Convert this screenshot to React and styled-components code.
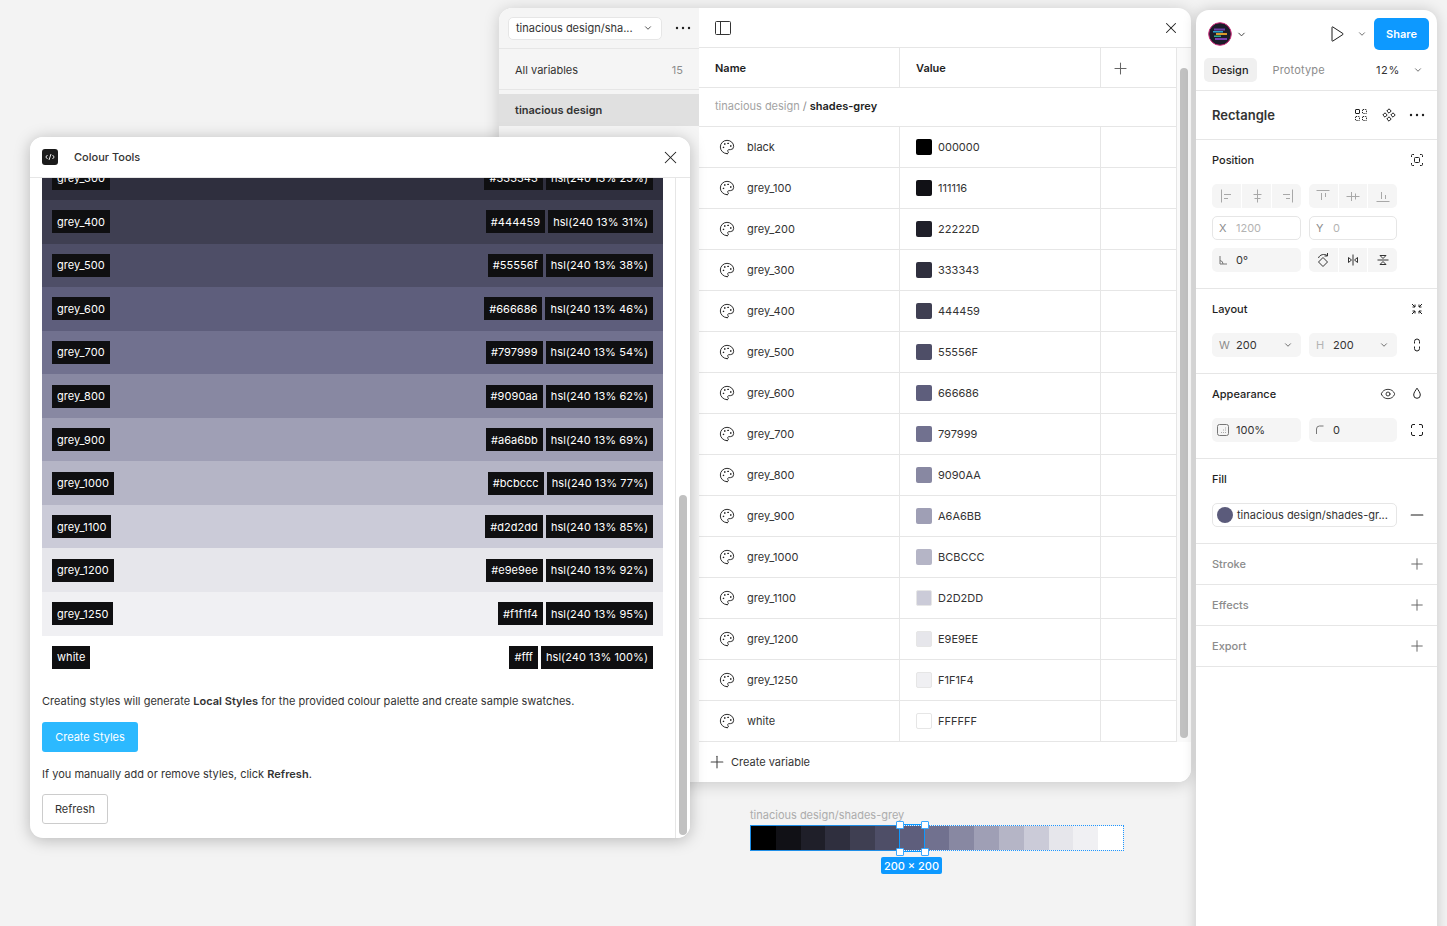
import React from 'react';
import styled, { createGlobalStyle } from 'styled-components';
import { Palette, Plus, X, ChevronDown, Minus, Eye } from 'lucide-react';

const GlobalStyle = createGlobalStyle`
  html, body {
    margin: 0;
    padding: 0;
    background: #f3f3f3;
    font-family: Inter, "Liberation Sans", sans-serif;
    -webkit-font-smoothing: antialiased;
  }
  * { box-sizing: border-box; }
`;

const Desktop = styled.div`
  position: relative;
  width: 1447px;
  height: 926px;
  overflow: hidden;
  background: #f3f3f3;
  color: #1e1e1e;
`;

// Variables window
const VariablesWindow = styled.div`
  position: absolute;
  left: 499px;
  top: 8px;
  width: 692px;
  height: 774px;
  display: flex;
  border-radius: 13px;
  overflow: hidden;
  background: #fff;
  box-shadow: 0 2px 16px rgba(0, 0, 0, 0.18);
`;

const Sidebar = styled.div`
  width: 200px;
  flex: none;
  background: #f5f5f5;
  display: flex;
  flex-direction: column;
`;

const SidebarTop = styled.div`
  height: 41px;
  flex: none;
  display: flex;
  align-items: center;
  padding: 0 8px 0 9px;
  justify-content: space-between;
  border-bottom: 1px solid #e6e6e6;
`;

const CollectionSelect = styled.div`
  width: 154px;
  height: 23px;
  display: flex;
  align-items: center;
  justify-content: space-between;
  padding: 0 8px 0 7px;
  background: #fff;
  border: 1px solid #e6e6e6;
  border-radius: 5px;
  font-size: 11px;
  color: #333;
`;

const AllVariables = styled.div`
  height: 41px;
  flex: none;
  display: flex;
  align-items: center;
  justify-content: space-between;
  padding: 2px 16px 0;
  font-size: 11px;
  color: #333;
  border-bottom: 1px solid #e6e6e6;

  span:last-child { color: #8c8c8c; }
`;

const GroupItem = styled.div`
  height: 32px;
  margin-top: 4px;
  display: flex;
  align-items: center;
  padding: 0 16px;
  background: #e0e0e0;
  font-size: 11px;
  font-weight: 600;
  color: #333;
`;

const Main = styled.div`
  flex: 1;
  min-width: 0;
  display: flex;
  flex-direction: column;
`;

const MainTop = styled.div`
  height: 40px;
  flex: none;
  display: flex;
  align-items: center;
  justify-content: space-between;
  padding: 0 11px 0 16px;
  border-bottom: 1px solid #e6e6e6;
`;

const TableWrap = styled.div`
  flex: 1;
  display: flex;
  min-height: 0;
`;

const Table = styled.div`
  flex: 1;
  min-width: 0;
  display: flex;
  flex-direction: column;
`;

const Row = styled.div`
  height: ${p => p.$h || 41}px;
  flex: none;
  display: grid;
  grid-template-columns: 201px 201px 1fr;
  border-bottom: 1px solid #e6e6e6;
`;

const HeadCell = styled.div`
  display: flex;
  align-items: center;
  padding-left: 16px;
  font-size: 11px;
  font-weight: 600;
  color: #1e1e1e;
  border-right: 1px solid #e6e6e6;
`;

const AddCell = styled.div`
  display: flex;
  align-items: center;
  padding: 1px 0 0 10px;
  color: #666;
`;

const GroupRow = styled.div`
  height: 39px;
  flex: none;
  display: flex;
  align-items: center;
  padding-left: 16px;
  padding-bottom: 2px;
  font-size: 11px;
  color: #a3a3a3;
  border-bottom: 1px solid #e6e6e6;

  span { color: #8c8c8c; margin: 0 3px; }
  b { color: #1e1e1e; font-weight: 600; }
`;

const NameCell = styled.div`
  display: flex;
  align-items: center;
  gap: 12px;
  padding-left: 20px;
  font-size: 11px;
  color: #333;
  border-right: 1px solid #e6e6e6;
`;

const ValueCell = styled.div`
  display: flex;
  align-items: center;
  gap: 6px;
  padding-left: 16px;
  font-size: 11px;
  color: #333;
  border-right: 1px solid #e6e6e6;
`;

const Swatch = styled.div`
  width: 16px;
  height: 16px;
  border-radius: 2px;
  background: ${p => p.$c};
  border: 1px solid ${p => (p.$light ? '#e6e6e6' : 'transparent')};
`;

const BlankCell = styled.div``;

const ScrollTrack = styled.div`
  width: 15px;
  flex: none;
  background: #fafafa;
  border-left: 1px solid #e6e6e6;
  padding: ${p => p.$top}px 0 0 3px;
`;

const ScrollThumb = styled.div`
  width: 8px;
  height: ${p => p.$h}px;
  border-radius: 4px;
  background: #c1c1c1;
`;

const CreateBar = styled.div`
  height: 40px;
  flex: none;
  display: flex;
  align-items: center;
  gap: 4px;
  padding-left: 8px;
  font-size: 11px;
  color: #333;
  background: #fff;

  svg { color: #444; }
`;

// Plugin window
const PluginWindow = styled.div`
  position: absolute;
  left: 30px;
  top: 137px;
  width: 660px;
  height: 701px;
  display: flex;
  flex-direction: column;
  border-radius: 13px;
  overflow: hidden;
  background: #fff;
  box-shadow: 0 2px 16px rgba(0, 0, 0, 0.25);
`;

const PluginHeader = styled.div`
  height: 41px;
  flex: none;
  display: flex;
  align-items: center;
  padding: 0 9.5px 0 12px;
  border-bottom: 1px solid #e6e6e6;
  font-size: 11px;
  font-weight: 500;
  color: #333;
  background: #fff;
`;

const PluginBadge = styled.div`
  width: 16px;
  height: 16px;
  margin-right: 16px;
  border-radius: 3px;
  background: #1a1a1a;
  display: flex;
  align-items: center;
  justify-content: center;
  color: #fff;
`;

const PluginClose = styled.div`
  margin-left: auto;
  display: flex;
  color: #1e1e1e;
`;

const PluginBody = styled.div`
  flex: 1;
  display: flex;
  min-height: 0;
`;

const PluginContent = styled.div`
  flex: 1;
  min-width: 0;
  overflow: hidden;
  padding: 0 12px;
`;

const ColourList = styled.div`
  margin-top: -21.5px;
`;

const ColourRow = styled.div`
  height: 43.55px;
  display: flex;
  align-items: center;
  justify-content: space-between;
  padding: 0 10px;
  background: ${p => p.$c};
`;

const TagGroup = styled.div`
  display: flex;
  gap: 3px;
`;

const Tag = styled.span`
  height: 23px;
  display: flex;
  align-items: center;
  padding: 0 5px;
  background: #0f0f11;
  color: #fff;
  font-size: 11px;
  letter-spacing: 0.06px;
  white-space: nowrap;
`;

const Para = styled.p`
  margin: 14px 0 11.5px;
  font-size: 11px;
  line-height: 17px;
  letter-spacing: 0.02px;
  color: #333;

  b { font-weight: 600; }
`;

const PrimaryBtn = styled.div`
  width: 96px;
  height: 30px;
  display: flex;
  align-items: center;
  justify-content: center;
  border-radius: 3px;
  background: #2cb9ff;
  color: #fff;
  font-size: 11px;
`;

const SecondaryBtn = styled.div`
  width: 66px;
  height: 30px;
  display: flex;
  align-items: center;
  justify-content: center;
  border-radius: 3px;
  border: 1px solid #ccc;
  color: #333;
  font-size: 11px;
`;

const PluginTrack = styled(ScrollTrack)`
  background: #fff;
`;

// Canvas frame with the selection
const CanvasFrame = styled.div`
  position: absolute;
  left: 750px;
  top: 808px;
  width: 374px;
`;

const FrameLabel = styled.div`
  font-size: 11px;
  line-height: 15px;
  color: #acacac;
  margin-bottom: 2px;
`;

const Strip = styled.div`
  position: relative;
  height: 26px;
  display: flex;
  border: 1px dotted #1e96ff;
`;

const StripCell = styled.div`
  flex: 1;
  background: ${p => p.$c};
`;

const SolidEdge = styled.div`
  position: absolute;
  left: -1px;
  top: -1px;
  bottom: -1px;
  width: 150px;
  border: 1px solid #1f8fe8;
  border-right: none;
`;

const Selection = styled.div`
  position: absolute;
  left: 148px;
  top: -2px;
  width: 26px;
  height: 28px;
  border: 1px solid #0d99ff;
`;

const Handle = styled.div`
  position: absolute;
  width: 8px;
  height: 8px;
  background: #fff;
  border: 1.5px solid #3aa8ff;
  border-radius: 1px;
  ${p => (p.$r ? 'right: -4.5px;' : 'left: -4.5px;')}
  ${p => (p.$b ? 'bottom: -4.5px;' : 'top: -4.5px;')}
`;

const SizeBadge = styled.div`
  position: absolute;
  left: 130px;
  top: 31px;
  width: 61px;
  height: 17px;
  display: flex;
  align-items: center;
  justify-content: center;
  border-radius: 2px;
  background: #0d99ff;
  color: #fff;
  font-size: 11px;
  font-weight: 500;
`;

// Right design panel
const DesignPanel = styled.div`
  position: absolute;
  left: 1196px;
  top: 10px;
  width: 241px;
  height: 930px;
  background: #fff;
  border-radius: 13px 13px 0 0;
  box-shadow: 0 0 14px rgba(0, 0, 0, 0.18);
  font-size: 11px;
  color: #333;
`;

const PanelTop = styled.div`
  height: 48px;
  display: flex;
  align-items: center;
  padding: 0 8px 0 12px;
`;

const LogoGroup = styled.div`
  display: flex;
  align-items: center;
  gap: 4px;
  margin-right: auto;
`;

const PlayGroup = styled.div`
  display: flex;
  align-items: center;
  gap: 13px;
`;

const ShareBtn = styled.div`
  width: 55px;
  height: 32px;
  margin-left: 7px;
  display: flex;
  align-items: center;
  justify-content: center;
  border-radius: 5px;
  background: #0d99ff;
  color: #fff;
  font-weight: 600;
  font-size: 11px;
`;

const TabsRow = styled.div`
  height: 33px;
  display: flex;
  align-items: flex-start;
  padding: 0 14px 0 8px;
  border-bottom: 1px solid #e6e6e6;
`;

const Tab = styled.div`
  height: 24px;
  display: flex;
  align-items: center;
  padding: 0 8px;
  border-radius: 5px;
  font-weight: ${p => (p.$active ? 500 : 400)};
  background: ${p => (p.$active ? '#f0f0f0' : 'transparent')};
  color: ${p => (p.$active ? '#1e1e1e' : '#8c8c8c')};
  margin-right: ${p => (p.$active ? 8 : 0)}px;
  letter-spacing: ${p => (p.$active ? 0 : 0.15)}px;
`;

const Zoom = styled.div`
  margin-left: auto;
  height: 24px;
  display: flex;
  align-items: center;
  gap: 13px;
  color: #333;
  letter-spacing: 0.7px;
`;

const TitleRow = styled.div`
  height: 49px;
  display: flex;
  align-items: center;
  justify-content: space-between;
  padding: 0 12px 0 16px;
  border-bottom: 1px solid #e6e6e6;
`;

const PanelTitle = styled.div`
  font-size: 13px;
  font-weight: 600;
  color: #333;
`;

const IconRow = styled.div`
  display: flex;
  gap: ${p => p.$gap || 12}px;
  align-items: center;
  color: #1e1e1e;
`;

const Section = styled.div`
  padding: 12px 8px 16px 16px;
  border-bottom: 1px solid #e6e6e6;
  display: flex;
  flex-direction: column;
  gap: 16px;
`;

const SectionHead = styled.div`
  height: 16px;
  display: flex;
  align-items: center;
  justify-content: space-between;
  padding-right: 4px;
  font-weight: 500;
  color: #1e1e1e;
`;

const CollapsedSection = styled.div`
  height: 41px;
  display: flex;
  align-items: center;
  justify-content: space-between;
  padding: 0 11px 0 16px;
  border-bottom: 1px solid #e6e6e6;
  font-weight: 500;
  color: #8c8c8c;

  svg { color: #666; }
`;

const FieldRows = styled.div`
  display: flex;
  flex-direction: column;
  gap: 8px;
`;

const FieldGrid = styled.div`
  display: grid;
  grid-template-columns: 89px 88px 24px;
  column-gap: 8px;
  height: 24px;
  align-items: center;
`;

const Field = styled.div`
  height: 24px;
  display: flex;
  align-items: center;
  gap: 8px;
  padding: 0 ${p => (p.$outline ? 6 : 7)}px;
  border-radius: 5px;
  background: ${p => (p.$outline ? '#fff' : '#f5f5f5')};
  border: ${p => (p.$outline ? '1px solid #e6e6e6' : 'none')};
  color: ${p => (p.$outline ? '#b3b3b3' : '#333')};
`;

const FieldLabel = styled.span`
  color: ${p => (p.$muted ? '#b3b3b3' : '#8c8c8c')};
  width: 9px;
  flex: none;
`;

const FieldIcon = styled.span`
  display: flex;
  margin-left: -4px;
  margin-right: -3px;
`;

const FieldEnd = styled.div`
  margin-left: auto;
  margin-right: 1px;
  display: flex;
`;

const SideIcon = styled.div`
  display: flex;
  justify-content: center;
  color: #1e1e1e;
`;

const Segments = styled.div`
  height: 24px;
  display: flex;
  gap: 1px;
  border-radius: 5px;
  overflow: hidden;
`;

const Segment = styled.div`
  flex: 1;
  display: flex;
  align-items: center;
  justify-content: center;
  background: #f5f5f5;
  color: ${p => (p.$dark ? '#333' : '#a8a8a8')};
`;

const FillField = styled.div`
  height: 24px;
  display: flex;
  align-items: center;
  gap: 4px;
  padding: 0 4px;
  border: 1px solid #e6e6e6;
  border-radius: 5px;
  color: #333;
  white-space: nowrap;
`;

const FillDot = styled.div`
  width: 16px;
  height: 16px;
  border-radius: 50%;
  background: #5b5b7b;
`;

const FillGrid = styled.div`
  display: grid;
  grid-template-columns: 185px 24px;
  column-gap: 8px;
  align-items: center;
`;

const greys = [
  ['black', '000000', '#000000'],
  ['grey_100', '111116', '#111116'],
  ['grey_200', '22222D', '#1f1f29'],
  ['grey_300', '333343', '#2f2f3e'],
  ['grey_400', '444459', '#3f3f52'],
  ['grey_500', '55556F', '#4e4e67'],
  ['grey_600', '666686', '#5e5e7c'],
  ['grey_700', '797999', '#71718f'],
  ['grey_800', '9090AA', '#8888a2'],
  ['grey_900', 'A6A6BB', '#9f9fb5'],
  ['grey_1000', 'BCBCCC', '#b5b5c6'],
  ['grey_1100', 'D2D2DD', '#cbcbd8'],
  ['grey_1200', 'E9E9EE', '#e6e6eb'],
  ['grey_1250', 'F1F1F4', '#f0f0f3'],
  ['white', 'FFFFFF', '#ffffff'],
];

const palette = [
  ['grey_300', '#333343', '23%'],
  ['grey_400', '#444459', '31%'],
  ['grey_500', '#55556f', '38%'],
  ['grey_600', '#666686', '46%'],
  ['grey_700', '#797999', '54%'],
  ['grey_800', '#9090aa', '62%'],
  ['grey_900', '#a6a6bb', '69%'],
  ['grey_1000', '#bcbccc', '77%'],
  ['grey_1100', '#d2d2dd', '85%'],
  ['grey_1200', '#e9e9ee', '92%'],
  ['grey_1250', '#f1f1f4', '95%'],
  ['white', '#fff', '100%'],
];

const colourFor = name => greys.find(g => g[0] === name)[2];

const Svg = ({ children, size = 16 }) => (
  <svg width={size} height={size} viewBox="0 0 16 16" fill="none" stroke="currentColor" strokeWidth="1">
    {children}
  </svg>
);

const DotsIcon = () => (
  <svg width="16" height="16" viewBox="0 0 16 16" fill="#1e1e1e">
    <circle cx="2" cy="8" r="1.2" />
    <circle cx="8" cy="8" r="1.2" />
    <circle cx="14" cy="8" r="1.2" />
  </svg>
);

const SidebarToggleIcon = () => (
  <svg width="16" height="14" viewBox="0 0 16 14" fill="none" stroke="#333" strokeWidth="1">
    <rect x="0.5" y="0.5" width="15" height="13" rx="1" />
    <path d="M5.5 0.5v13" />
  </svg>
);

const alignIcons = [
  <path key="a" d="M2.500 1.500v13M5 6.500h7M5 10.500h4" />,
  <path key="b" d="M8.500 1.500v13M4.500 6.500h8M5.500 10.500h6" />,
  <path key="c" d="M13.500 1.500v13M4 6.500h7M7 10.500h4" />,
  <path key="d" d="M1.500 2.500h13M6.500 5v7M10.500 5v4" />,
  <path key="e" d="M1.500 8.500h13M6.500 4v9M10.500 5.500v6" />,
  <path key="f" d="M1.500 13.500h13M6.500 4v7M10.500 7v4" />,
];

const flipIcons = [
  <path key="g" d="M8 5.500l4.500 4.500-4.500 4.500-4.500-4.500zM3.500 6C4.500 2.500 9.500 1.500 12 3.500M12.500 1v3H9.500" />,
  <path key="h" d="M8 2.500v11M3.500 5.500v5L6.500 8zM12.500 5.500v5L9.500 8z" />,
  <path key="i" d="M2.500 8h11M5 3.500h6L8 6.500zM5 12.500h6L8 9.500z" />,
];

const LogoIcon = () => (
  <svg width="24" height="24" viewBox="0 0 24 24">
    <circle cx="12" cy="12" r="11.300" fill="#1c1c2a" stroke="#d12a7c" strokeWidth="1" />
    <rect x="6" y="6.500" width="11" height="2" fill="#6e3fa8" />
    <rect x="5" y="9" width="10" height="1.500" fill="#2b9fc8" />
    <rect x="8" y="11" width="11" height="2" fill="#d99a2b" />
    <rect x="6" y="13.500" width="7" height="1.500" fill="#2fa98a" />
    <rect x="7" y="16" width="12" height="2" fill="#7a3fb0" />
  </svg>
);

const PlayIcon = () => (
  <svg width="14" height="16" viewBox="0 0 14 16" fill="none" stroke="#1e1e1e" strokeWidth="1">
    <path d="M2 1.500v13a.6.6 0 0 0 .9.5l10-6.500a.6.6 0 0 0 0-1L2.900 1a.6.6 0 0 0-.9.5z" />
  </svg>
);

const GridDashIcon = () => (
  <Svg>
    <rect x="2.500" y="2.500" width="4" height="4" rx=".5" />
    <rect x="9.500" y="2.500" width="4" height="4" rx=".5" strokeDasharray="1.200 1" />
    <rect x="2.500" y="9.500" width="4" height="4" rx=".5" strokeDasharray="1.200 1" />
    <rect x="9.500" y="9.500" width="4" height="4" rx=".5" strokeDasharray="1.200 1" />
  </Svg>
);

const ComponentIcon = () => (
  <Svg>
    <path d="M8 1.800l2.200 2.200L8 6.200 5.800 4zM8 9.800l2.200 2.200L8 14.200 5.800 12zM4 5.800L6.200 8 4 10.200 1.800 8zM12 5.800L14.200 8 12 10.200 9.800 8z" />
  </Svg>
);

const FrameFocusIcon = () => (
  <Svg>
    <path d="M2.500 5V3.500a1 1 0 0 1 1-1H5M11 2.500h1.500a1 1 0 0 1 1 1V5M13.500 11v1.500a1 1 0 0 1-1 1H11M5 13.500H3.500a1 1 0 0 1-1-1V11" />
    <rect x="5.500" y="5.500" width="5" height="5" rx="1" />
  </Svg>
);

const CollapseIcon = () => (
  <Svg>
    <path d="M3 3l3 3M6 3.500V6H3.500M13 3l-3 3M10 3.500V6h2.500M3 13l3-3M6 12.500V10H3.500M13 13l-3-3M10 12.500V10h2.500" />
  </Svg>
);

const LinkIcon = () => (
  <Svg>
    <path d="M5.500 6.500V4.500a2.500 2.500 0 0 1 5 0v2M5.500 9.500v2a2.500 2.500 0 0 0 5 0v-2" />
  </Svg>
);

const DropIcon = () => (
  <Svg>
    <path d="M8 2.200C6.700 4.400 4.700 6.400 4.700 9a3.300 3.300 0 0 0 6.600 0C11.300 6.400 9.300 4.400 8 2.200z" />
  </Svg>
);

const CornersIcon = () => (
  <Svg>
    <path d="M2.500 6V4a1.500 1.500 0 0 1 1.500-1.500h2M10 2.500h2A1.500 1.500 0 0 1 13.500 4v2M13.500 10v2a1.500 1.500 0 0 1-1.500 1.500h-2M6 13.500H4A1.500 1.500 0 0 1 2.500 12v-2" />
  </Svg>
);

const AngleIcon = () => (
  <Svg>
    <path d="M5 4v8h7M5 8.500a3.500 3.500 0 0 1 3 3.500" stroke="#777" />
  </Svg>
);

const RadiusIcon = () => (
  <Svg>
    <path d="M4.500 12V7a3 3 0 0 1 3-3h4" stroke="#777" />
  </Svg>
);

const OpacityIcon = () => (
  <Svg>
    <rect x="2.500" y="2.500" width="11" height="11" rx="2" stroke="#777" />
    <path d="M10 6h1M8 8h3M6 10.500h5" stroke="#aaa" strokeDasharray="1 1" />
  </Svg>
);

const App = () => (
  <Desktop>
    <GlobalStyle />

    <VariablesWindow>
      <Sidebar>
        <SidebarTop>
          <CollectionSelect>
            <span>tinacious design/sha...</span>
            <ChevronDown size={10} />
          </CollectionSelect>
          <DotsIcon />
        </SidebarTop>
        <AllVariables>
          <span>All variables</span>
          <span>15</span>
        </AllVariables>
        <GroupItem>tinacious design</GroupItem>
      </Sidebar>
      <Main>
        <MainTop>
          <SidebarToggleIcon />
          <X size={18} strokeWidth={1.4} color="#1e1e1e" />
        </MainTop>
        <TableWrap>
          <Table>
            <Row $h={40}>
              <HeadCell>Name</HeadCell>
              <HeadCell>Value</HeadCell>
              <AddCell><Plus size={19} strokeWidth={1.3} /></AddCell>
            </Row>
            <GroupRow>
              tinacious design<span>/</span><b>shades-grey</b>
            </GroupRow>
            {greys.map(([name, hex, colour]) => (
              <Row key={name}>
                <NameCell>
                  <Palette size={16} strokeWidth={1.4} color="#1e1e1e" />
                  {name}
                </NameCell>
                <ValueCell>
                  <Swatch $c={colour} $light={hex > 'D' && /^[A-F]/.test(hex)} />
                  {hex}
                </ValueCell>
                <BlankCell />
              </Row>
            ))}
          </Table>
          <ScrollTrack $top={20}>
            <ScrollThumb $h={670} />
          </ScrollTrack>
        </TableWrap>
        <CreateBar>
          <Plus size={20} strokeWidth={1.3} />
          Create variable
        </CreateBar>
      </Main>
    </VariablesWindow>

    <PluginWindow>
      <PluginHeader>
        <PluginBadge>
          <svg width="10" height="8" viewBox="0 0 10 8" fill="none" stroke="#fff" strokeWidth="0.9">
            <path d="M2.500 2L.8 4l1.700 2M7.500 2l1.700 2-1.700 2M6 1L4 7" />
          </svg>
        </PluginBadge>
        Colour Tools
        <PluginClose><X size={21} strokeWidth={1.2} /></PluginClose>
      </PluginHeader>
      <PluginBody>
        <PluginContent>
          <ColourList>
            {palette.map(([name, hex, light]) => (
              <ColourRow key={name} $c={name === 'white' ? '#ffffff' : colourFor(name)}>
                <Tag>{name}</Tag>
                <TagGroup>
                  <Tag>{hex}</Tag>
                  <Tag>hsl(240 13% {light})</Tag>
                </TagGroup>
              </ColourRow>
            ))}
          </ColourList>
          <Para>
            Creating styles will generate <b>Local Styles</b> for the provided colour palette and create sample swatches.
          </Para>
          <PrimaryBtn>Create Styles</PrimaryBtn>
          <Para>
            If you manually add or remove styles, click <b>Refresh</b>.
          </Para>
          <SecondaryBtn>Refresh</SecondaryBtn>
        </PluginContent>
        <PluginTrack $top={317}>
          <ScrollThumb $h={340} />
        </PluginTrack>
      </PluginBody>
    </PluginWindow>

    <CanvasFrame>
      <FrameLabel>tinacious design/shades-grey</FrameLabel>
      <Strip>
        {greys.map(([name, , colour]) => (
          <StripCell key={name} $c={colour} />
        ))}
        <SolidEdge />
        <Selection>
          <Handle />
          <Handle $r />
          <Handle $b />
          <Handle $r $b />
        </Selection>
        <SizeBadge>200 × 200</SizeBadge>
      </Strip>
    </CanvasFrame>

    <DesignPanel>
      <PanelTop>
        <LogoGroup>
          <LogoIcon />
          <ChevronDown size={11} />
        </LogoGroup>
        <PlayGroup>
          <PlayIcon />
          <ChevronDown size={10} color="#555" />
        </PlayGroup>
        <ShareBtn>Share</ShareBtn>
      </PanelTop>
      <TabsRow>
        <Tab $active>Design</Tab>
        <Tab>Prototype</Tab>
        <Zoom>
          12%
          <ChevronDown size={10} color="#555" />
        </Zoom>
      </TabsRow>
      <TitleRow>
        <PanelTitle>Rectangle</PanelTitle>
        <IconRow>
          <GridDashIcon />
          <ComponentIcon />
          <DotsIcon />
        </IconRow>
      </TitleRow>

      <Section>
        <SectionHead>
          Position
          <FrameFocusIcon />
        </SectionHead>
        <FieldRows>
          <FieldGrid>
            <Segments>
              {alignIcons.slice(0, 3).map(icon => (
                <Segment key={icon.key}><Svg>{icon}</Svg></Segment>
              ))}
            </Segments>
            <Segments>
              {alignIcons.slice(3).map(icon => (
                <Segment key={icon.key}><Svg>{icon}</Svg></Segment>
              ))}
            </Segments>
          </FieldGrid>
          <FieldGrid>
            <Field $outline><FieldLabel>X</FieldLabel>1200</Field>
            <Field $outline><FieldLabel>Y</FieldLabel>0</Field>
          </FieldGrid>
          <FieldGrid>
            <Field><FieldIcon><AngleIcon /></FieldIcon>0°</Field>
            <Segments>
              {flipIcons.map(icon => (
                <Segment key={icon.key} $dark><Svg>{icon}</Svg></Segment>
              ))}
            </Segments>
          </FieldGrid>
        </FieldRows>
      </Section>

      <Section>
        <SectionHead>
          Layout
          <CollapseIcon />
        </SectionHead>
        <FieldGrid>
          <Field>
            <FieldLabel>W</FieldLabel>200
            <FieldEnd><ChevronDown size={10} color="#555" /></FieldEnd>
          </Field>
          <Field>
            <FieldLabel $muted>H</FieldLabel>200
            <FieldEnd><ChevronDown size={10} color="#555" /></FieldEnd>
          </Field>
          <SideIcon><LinkIcon /></SideIcon>
        </FieldGrid>
      </Section>

      <Section>
        <SectionHead>
          Appearance
          <IconRow $gap={13}>
            <Eye size={16} strokeWidth={1.3} />
            <DropIcon />
          </IconRow>
        </SectionHead>
        <FieldGrid>
          <Field><FieldIcon><OpacityIcon /></FieldIcon>100%</Field>
          <Field><FieldIcon><RadiusIcon /></FieldIcon>0</Field>
          <SideIcon><CornersIcon /></SideIcon>
        </FieldGrid>
      </Section>

      <Section>
        <SectionHead>Fill</SectionHead>
        <FillGrid>
          <FillField>
            <FillDot />
            tinacious design/shades-gr...
          </FillField>
          <SideIcon><Minus size={20} strokeWidth={1.3} /></SideIcon>
        </FillGrid>
      </Section>

      <CollapsedSection>Stroke<Plus size={18} strokeWidth={1.3} /></CollapsedSection>
      <CollapsedSection>Effects<Plus size={18} strokeWidth={1.3} /></CollapsedSection>
      <CollapsedSection>Export<Plus size={18} strokeWidth={1.3} /></CollapsedSection>
    </DesignPanel>
  </Desktop>
);

export default App;
